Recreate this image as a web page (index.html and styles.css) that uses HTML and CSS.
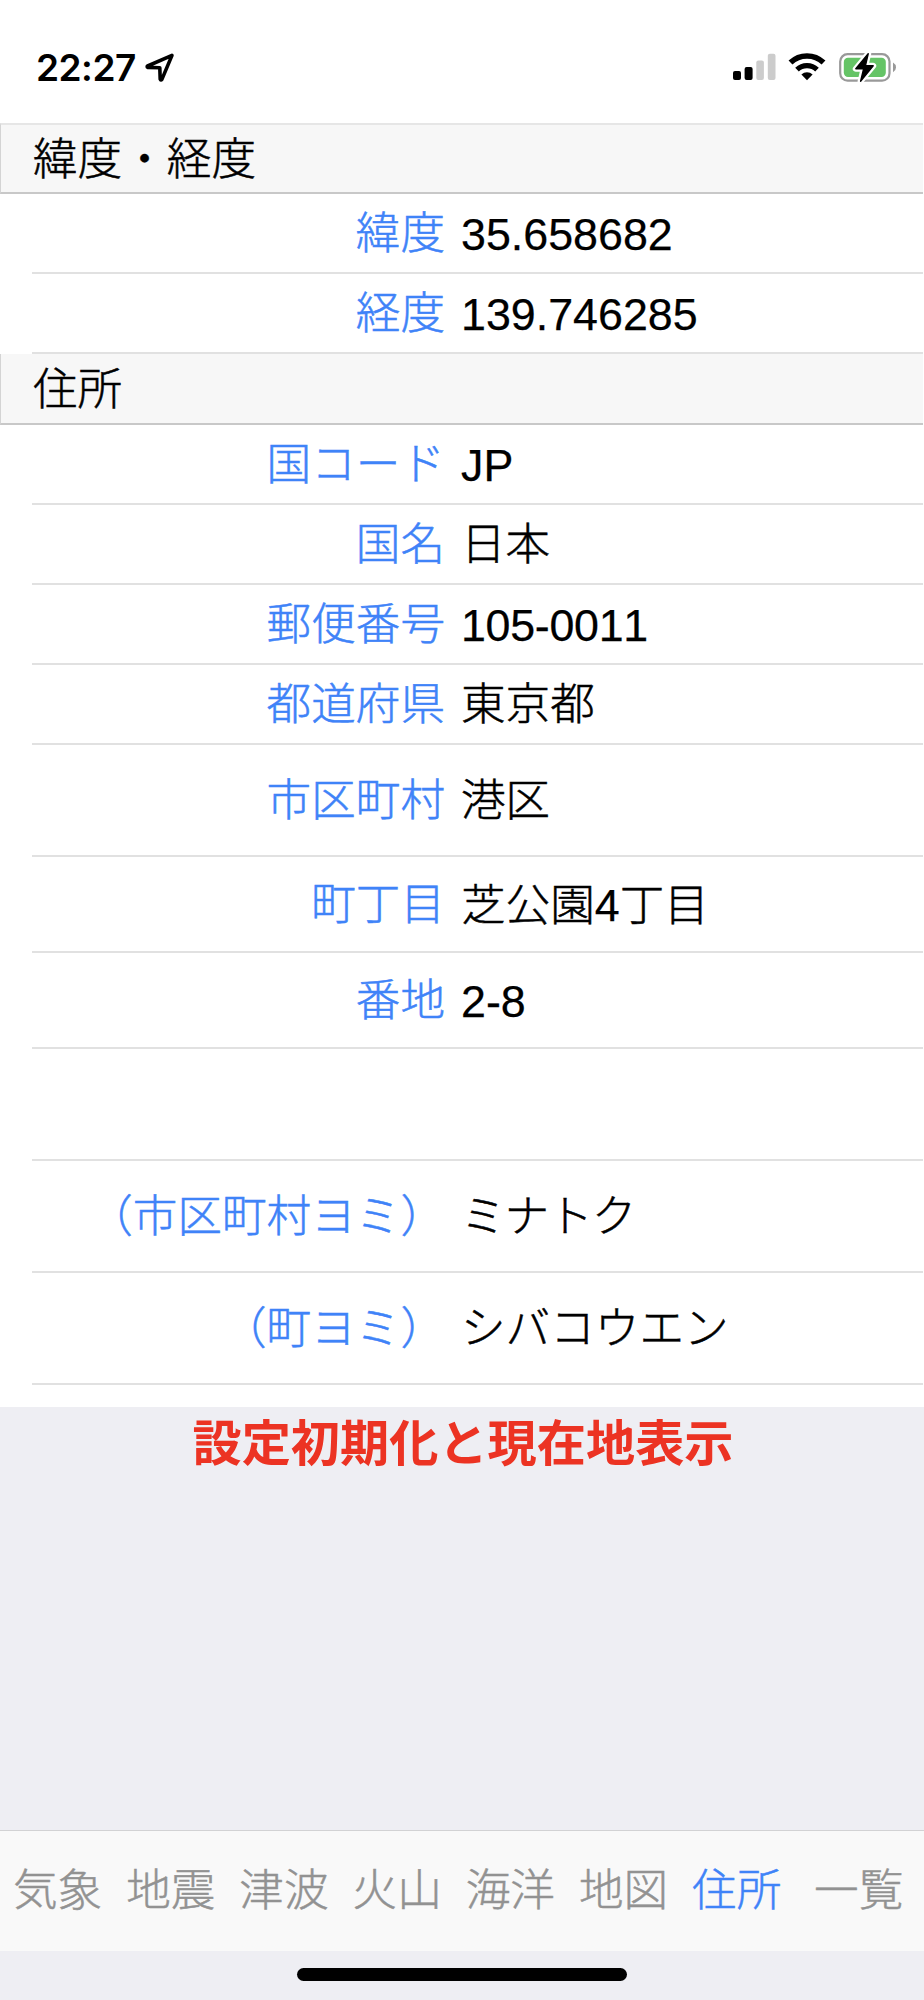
FILE: index.html
```html
<!DOCTYPE html>
<html lang="ja">
<head>
<meta charset="utf-8">
<title>住所</title>
<link rel="stylesheet" href="styles.css">
</head>
<body>
<div class="screen">
  <header class="status">
    <div class="status-left">
      <span class="time">22:27</span>
      <svg class="location" width="30" height="30" viewBox="0 0 30 30"><path d="M27 2.4 L2.6 13 Q1.6 13.8 2.8 14.4 L14.8 14.8 L15.2 26.2 Q15.8 27.8 16.9 26.4 Z" fill="none" stroke="#000" stroke-width="3.6" stroke-linejoin="round"/></svg>
    </div>
    <div class="status-right">
      <svg class="signal" width="44" height="28" viewBox="0 0 44 28"><rect x="0" y="18" width="8" height="9" rx="2"/><rect x="11.6" y="14" width="8" height="13" rx="2"/><rect x="23.3" y="7.5" width="7.6" height="19.5" rx="2" fill="#ccc"/><rect x="34.8" y="0.8" width="7.7" height="26.2" rx="2" fill="#ccc"/></svg>
      <svg class="wifi" width="38" height="28" viewBox="0 0 38 28"><path d="M2.5 9.6 A23.8 23.8 0 0 1 35.5 9.6" fill="none" stroke="#000" stroke-width="5.6"/><path d="M9 16.6 A14.4 14.4 0 0 1 29 16.6" fill="none" stroke="#000" stroke-width="5.2"/><path d="M13.4 21.4 A8.4 8.4 0 0 1 24.6 21.4 L19 27.3 Z"/></svg>
      <svg class="battery" width="58" height="31" viewBox="0 0 58 31"><rect x="1.2" y="1.2" width="49.3" height="26.4" rx="7.4" fill="none" stroke="#999" stroke-width="2.2"/><rect x="4.8" y="4.8" width="42" height="19.2" rx="4.2" fill="#65c466"/><path d="M54 9.6 Q57 11.4 57 14.4 Q57 17.4 54 19.2 Z" fill="#999"/><path d="M29.2 0.8 L16.8 15.8 H24.6 L21.6 28.2 L34.2 12.8 H26.4 Z" fill="#fff" stroke="#fff" stroke-width="6" stroke-linejoin="round"/><path d="M29.2 0.8 L16.8 15.8 H24.6 L21.6 28.2 L34.2 12.8 H26.4 Z" stroke="#000" stroke-width="1.4" stroke-linejoin="round"/></svg>
    </div>
  </header>
  <main class="list">
    <h2 class="section first">緯度・経度</h2>
    <div class="row"><span class="label">緯度</span><span class="value latin">35.658682</span></div>
    <div class="row"><span class="label">経度</span><span class="value latin">139.746285</span></div>
    <h2 class="section">住所</h2>
    <div class="row"><span class="label">国コード</span><span class="value latin">JP</span></div>
    <div class="row"><span class="label">国名</span><span class="value">日本</span></div>
    <div class="row"><span class="label">郵便番号</span><span class="value latin postcode">105-0011</span></div>
    <div class="row"><span class="label">都道府県</span><span class="value">東京都</span></div>
    <div class="row tall"><span class="label">市区町村</span><span class="value">港区</span></div>
    <div class="row medium"><span class="label">町丁目</span><span class="value">芝公園<span class="latin">4</span>丁目</span></div>
    <div class="row medium"><span class="label">番地</span><span class="value latin">2-8</span></div>
    <div class="row tall"></div>
    <div class="row tall"><span class="label">（市区町村ヨミ）</span><span class="value kana">ミナトク</span></div>
    <div class="row tall"><span class="label">（町ヨミ）</span><span class="value">シバコウエン</span></div>
  </main>
  <div class="reset">設定初期化と現在地表示</div>
  <nav class="tabs">
    <span class="tab">気象</span><span class="tab">地震</span><span class="tab">津波</span><span class="tab">火山</span><span class="tab">海洋</span><span class="tab">地図</span><span class="tab active">住所</span><span class="tab last">一覧</span>
  </nav>
  <footer class="home"><div class="home-bar"></div></footer>
</div>
</body>
</html>
```

FILE: styles.css
```css
* { box-sizing: border-box; }
body {
  margin: 0;
  background: #eeeef3;
  color: #000;
  font-family: "Liberation Sans", "Noto Sans CJK JP", sans-serif;
  font-size: 44.6px;
  font-weight: 300;
  font-kerning: none;
}
.screen {
  width: 924px;
  height: 2000px;
  display: flex;
  flex-direction: column;
  overflow: hidden;
}
.status {
  flex: none;
  height: 123px;
  padding: 53px 26px 0 36px;
  display: flex;
  justify-content: space-between;
  align-items: flex-start;
  background: #fff;
}
.status-left, .status-right { display: flex; align-items: flex-start; }
.time {
  font-family: Inter, sans-serif;
  font-weight: 600;
  font-size: 37px;
  letter-spacing: -0.5px;
  line-height: 29px;
  width: 109px;
}
.signal { margin-right: 11px; }
.wifi { margin-right: 13px; }
.status-right { padding-right: 1px; }
.list {
  flex: none;
  height: 1284px;
  background: #fff;
}
.section {
  margin: 0 1px 0 0;
  height: 71px;
  padding: 0 0 0 32px;
  border-left: 1px solid #d4d4d4;
  border-bottom: 2px solid #c8c8c8;
  background: #f7f7f7;
  font-size: 44.6px;
  font-weight: 300;
  line-height: 71px;
  -webkit-text-stroke: 0.5px currentColor;
}
.first { border-top: 2px solid #e6e6e6; line-height: 69px; }
.row {
  height: 80px;
  margin: 0 1px 0 32px;
  padding-top: 2px;
  border-bottom: 2px solid #e1e1e1;
  display: grid;
  grid-template-columns: 413px 1fr;
  column-gap: 16px;
  align-items: center;
  line-height: 66px;
}
.medium { height: 96px; }
.tall { height: 112px; }
.label { color: #3f83f8; text-align: right; white-space: nowrap; -webkit-text-stroke: 0.5px currentColor; }
.value { white-space: nowrap; -webkit-text-stroke: 0.5px currentColor; }
.latin { font-size: 44.8px; -webkit-text-stroke: 0.25px currentColor; }
.postcode { letter-spacing: -0.3px; }
.kana { letter-spacing: -1px; }
.reset {
  flex: 1;
  padding-left: 2px;
  text-align: center;
  color: #ec3323;
  font-weight: 700;
  font-size: 49.2px;
  line-height: 73px;
}
.tabs {
  flex: none;
  height: 121px;
  padding: 0 0 0 1px;
  border-top: 1px solid #d2d2d4;
  background: #f9f9f9;
  color: #929292;
  display: flex;
  align-items: center;
}
.tab { width: 113.2px; text-align: center; line-height: 66px; white-space: nowrap; -webkit-text-stroke: 0.5px currentColor; }
.last { flex: 1; }
.active { color: #3f83f8; }
.home {
  flex: none;
  height: 49px;
  padding-top: 17px;
}
.home-bar {
  width: 330px;
  height: 13px;
  margin: 0 auto;
  border-radius: 7px;
  background: #000;
}
```
